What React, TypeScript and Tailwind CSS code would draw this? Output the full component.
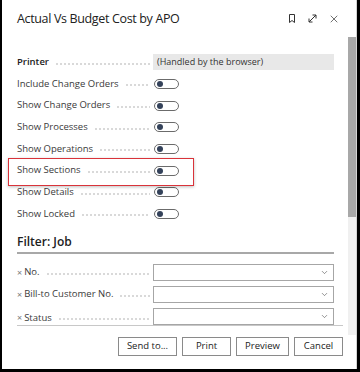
import { X, ChevronDown } from "lucide-react";

const toggles = [
  "Include Change Orders",
  "Show Change Orders",
  "Show Processes",
  "Show Operations",
  "Show Sections",
  "Show Details",
  "Show Locked",
];

const filters = ["No.", "Bill-to Customer No.", "Status"];

const buttons = [
  { label: "Send to...", w: "w-[59px]" },
  { label: "Print", w: "w-[49px]" },
  { label: "Preview", w: "w-[53px]" },
  { label: "Cancel", w: "w-[49px]" },
];

function Dots() {
  return (
    <span className="flex-1 h-[2px] ml-[6px] mr-[3px] mt-[3px] bg-[radial-gradient(circle,#c4c4c4_0.6px,transparent_0.9px)] bg-[length:4px_2px] bg-repeat-x" />
  );
}

function Toggle() {
  return (
    <span className="flex items-center w-[25px] h-[10px] rounded-full border border-[#6b6b6b] px-[2px]">
      <span className="w-[6px] h-[6px] rounded-full bg-[#34425a]" />
    </span>
  );
}

function App() {
  return (
    <div
      className="w-[360px] h-[372px] bg-black flex pl-[2px] pr-[3px] pb-[3px] text-[#212121]"
      style={{ fontFamily: '"Open Sans", "Noto Sans", sans-serif' }}
    >
      <div className="relative flex-1 bg-white flex flex-col border-r border-[#d4d4d4]">
        {/* header */}
        <div className="h-[37px] flex items-center pl-[15px] pr-[16px] shrink-0">
          <h1 className="text-[12.5px] font-medium tracking-[-0.35px] flex-1 pt-[2px]">
            Actual Vs Budget Cost by APO
          </h1>
          <div className="flex items-center gap-[10px] text-[#333]">
            <svg width="10" height="11" viewBox="0 0 10 11" fill="none" stroke="currentColor" strokeWidth="1">
              <path d="M2.5 1.5h5v8l-2.5-2-2.5 2z" />
            </svg>
            <svg width="11" height="11" viewBox="0 0 11 11" fill="none" stroke="currentColor" strokeWidth="1">
              <path d="M2 9l7-7M5.5 2H9v3.5M2 5.5V9h3.5" />
            </svg>
            <X size={12} strokeWidth={1.4} />
          </div>
        </div>

        {/* body */}
        <div className="flex flex-1 min-h-0">
          <div className="flex-1 flex flex-col">
            <div className="h-[288px] overflow-hidden pl-[15px] pr-[14px] pt-[17px] text-[9.5px]">
              <div className="flex items-center h-[16px]">
                <div className="w-[136px] flex items-center">
                  <span className="font-semibold">Printer</span>
                  <Dots />
                </div>
                <div className="flex-1 h-[16px] bg-[#e8e8e8] pl-[4px] flex items-center text-[9px] text-[#333]">
                  (Handled by the browser)
                </div>
              </div>
              <div className="mt-[3px]">
                {toggles.map((t) => (
                  <div key={t} className="flex items-center h-[21.7px]">
                    <div className="w-[136px] flex items-center text-[#3a3a3a]">
                      <span>{t}</span>
                      <Dots />
                    </div>
                    <div className="pl-[1px]">
                      <Toggle />
                    </div>
                  </div>
                ))}
              </div>

              <div className="mt-[9px] h-[17px] flex items-center text-[12px] font-semibold">
                Filter: Job
              </div>
              <div className="mt-[1px] border-t-2 border-[#a8a8a8]" />

              <div className="mt-[10px] flex flex-col gap-[5px]">
                {filters.map((f, i) => (
                  <div key={f} className={`flex h-[17px] ${i === 2 ? "items-end" : "items-center"}`}>
                    <div className="w-[136px] flex items-center text-[#3a3a3a]">
                      <span className="text-[9px] text-[#777] mr-[2px]">×</span>
                      <span>{f}</span>
                      <Dots />
                    </div>
                    <div className="flex-1 self-stretch border border-[#a6a6a6] flex items-center justify-end pr-[4px]">
                      <ChevronDown size={9} strokeWidth={1.5} className="text-[#444]" />
                    </div>
                  </div>
                ))}
              </div>
            </div>
            <div className="ml-[15px] mr-[5px] border-t border-[#c8c8c8]" />

            {/* footer */}
            <div className="flex justify-end gap-[5px] pr-[5px] mt-[11px]">
              {buttons.map((b) => (
                <button
                  key={b.label}
                  className={`${b.w} h-[19px] border border-[#8a8a8a] bg-white text-[9.5px] text-[#222] flex items-center justify-center`}
                >
                  {b.label}
                </button>
              ))}
            </div>
          </div>

          {/* scrollbar */}
          <div className="w-[8px] h-[298px] bg-[#f0f0f0] flex flex-col">
            <div className="h-[180px] bg-[#a8a8a8]" />
          </div>
        </div>

        {/* highlight annotation */}
        <div className="absolute left-[6px] top-[158px] w-[186px] h-[28px] border-[1.5px] border-[#d9333a] shadow-[0_1px_3px_rgba(0,0,0,0.25)]" />
      </div>
    </div>
  );
}

export default App;
